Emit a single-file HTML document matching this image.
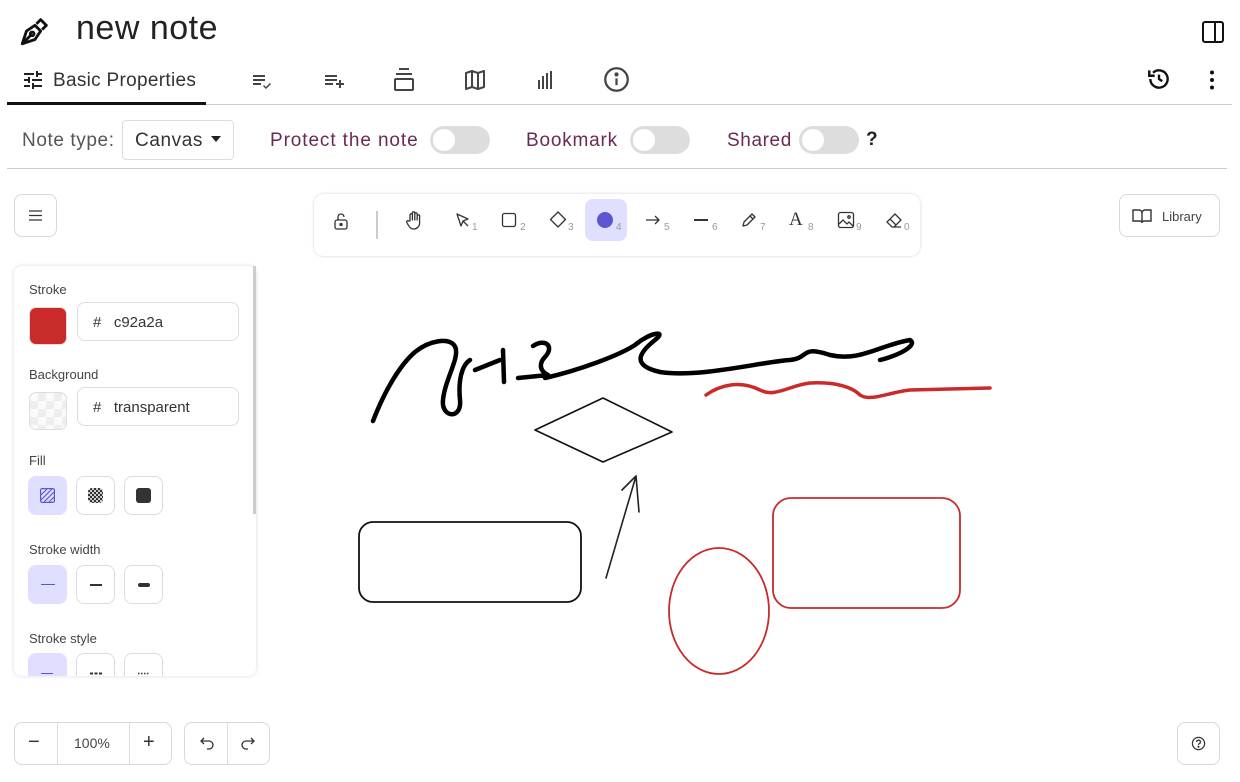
<!DOCTYPE html>
<html><head><meta charset="utf-8"><style>
*{box-sizing:border-box;margin:0;padding:0}
body{width:1240px;height:782px;overflow:hidden;background:#fff;font-family:"Liberation Sans",sans-serif;position:relative;color:#222}
.abs{position:absolute}
.tog{position:absolute;width:60px;height:28px;border-radius:14px;background:#ddd}
.tog::after{content:"";position:absolute;left:3px;top:3px;width:22px;height:22px;border-radius:50%;background:#fff}
.lbl{position:absolute;font-size:19px;color:#555;letter-spacing:0.6px}
.btn{position:absolute;border:1px solid #d8d8d8;border-radius:8px;background:#fff}
.pl{position:absolute;font-size:13px;color:#444}
.sq{position:absolute;width:39px;height:39px;border:1px solid #ddd;border-radius:8px;background:#fff;display:flex;align-items:center;justify-content:center}
.sq.on{background:#e0dfff;border-color:#e0dfff}
.num{font-size:10px;color:#999;position:absolute}
</style></head><body>
<svg class="abs" style="left:18px;top:14px" width="34" height="34" viewBox="0 0 24 24" fill="none" stroke="#111" stroke-width="2" stroke-linejoin="round"><path d="M3 21l3-9 6-4 4 4-4 6-9 3z"/><path d="M3 21l6-6"/><circle cx="10" cy="14" r="1.3"/><path d="M13 7l3-3 4 4-3 3"/></svg>
<div class="abs" style="left:76px;top:9px;font-size:34px;color:#222;letter-spacing:0.5px">new note</div>
<svg class="abs" style="left:1201px;top:20px" width="24" height="24" viewBox="0 0 24 24" fill="none" stroke="#111" stroke-width="2"><rect x="2" y="2" width="20" height="20" rx="2"/><path d="M14 2v20"/></svg>
<svg class="abs" style="left:20px;top:68px" width="26" height="24" viewBox="0 0 24 24" fill="#222"><path d="M3 17v2h6v-2H3zM3 5v2h10V5H3zm10 16v-2h8v-2h-8v-2h-2v6h2zM7 9v2H3v2h4v2h2V9H7zm14 4v-2H11v2h10zm-6-4h2V7h4V5h-4V3h-2v6z"/></svg>
<div class="abs" style="left:53px;top:70px;font-size:19px;color:#333;letter-spacing:0.3px">Basic Properties</div>
<div class="abs" style="left:7px;top:102px;width:199px;height:3px;background:#111"></div>
<div class="abs" style="left:206px;top:104px;width:1026px;height:1px;background:#ccc"></div>
<svg class="abs" style="left:250px;top:69px" width="24" height="24" viewBox="0 0 24 24" fill="#444"><path d="M3 6h12v2H3zM3 10h12v2H3zM3 14h8v2H3zm11 2l2 2 4-4 1 1-5 5-3-3z"/></svg>
<svg class="abs" style="left:322px;top:69px" width="24" height="24" viewBox="0 0 24 24" fill="#444"><path d="M3 6h12v2H3zM3 10h12v2H3zM3 14h8v2H3zm14 0v-3h2v3h3v2h-3v3h-2v-3h-3v-2z"/></svg>
<svg class="abs" style="left:392px;top:67px" width="24" height="26" viewBox="0 0 24 26" fill="none" stroke="#444" stroke-width="2"><path d="M7 2h10M4 7h16"/><rect x="3" y="12" width="18" height="11" rx="1"/></svg>
<svg class="abs" style="left:462px;top:68px" width="26" height="24" viewBox="0 0 24 24" fill="none" stroke="#444" stroke-width="2" stroke-linejoin="round"><path d="M3 5l6-2 6 2 6-2v16l-6 2-6-2-6 2zM9 3v16M15 5v16"/></svg>
<svg class="abs" style="left:534px;top:68px" width="24" height="24" viewBox="0 0 24 24" fill="#444"><rect x="4" y="12" width="2" height="9"/><rect x="8" y="8" width="2" height="13"/><rect x="12" y="5" width="2" height="16"/><rect x="16" y="3" width="2" height="18"/></svg>
<svg class="abs" style="left:603px;top:66px" width="27" height="27" viewBox="0 0 24 24" fill="none" stroke="#444" stroke-width="2"><circle cx="12" cy="12" r="10"/><path d="M12 11v6"/><circle cx="12" cy="7.5" r=".8" fill="#444"/></svg>
<svg class="abs" style="left:1146px;top:66px" width="26" height="26" viewBox="0 0 24 24" fill="none" stroke="#111" stroke-width="2.2"><path d="M4 12a8 8 0 1 0 2.5-5.8"/><path d="M3 4v5h5" /><path d="M12 8v4l3 2"/></svg>
<svg class="abs" style="left:1200px;top:68px" width="24" height="24" viewBox="0 0 24 24" fill="#111"><circle cx="12" cy="4.5" r="2"/><circle cx="12" cy="12" r="2"/><circle cx="12" cy="19.5" r="2"/></svg>
<div class="lbl" style="left:22px;top:130px">Note type:</div>
<div class="abs" style="left:122px;top:120px;width:112px;height:40px;border:1px solid #ddd;border-radius:4px;font-size:19px;color:#333;padding:9px 0 0 12px;letter-spacing:0.6px">Canvas</div>
<div class="abs" style="left:211px;top:136px;border-left:5px solid transparent;border-right:5px solid transparent;border-top:6px solid #222"></div>
<div class="lbl" style="left:270px;top:130px;color:#6a2a55;letter-spacing:0.9px">Protect the note</div>
<div class="tog" style="left:430px;top:126px"></div>
<div class="lbl" style="left:526px;top:130px;color:#6a2a55;letter-spacing:0.8px">Bookmark</div>
<div class="tog" style="left:630px;top:126px"></div>
<div class="lbl" style="left:727px;top:130px;color:#6a2a55;letter-spacing:0.6px">Shared</div>
<div class="tog" style="left:799px;top:126px"></div>
<div class="abs" style="left:866px;top:129px;font-size:19px;font-weight:bold">?</div>
<div class="abs" style="left:7px;top:168px;width:1220px;height:1px;background:#ccc"></div>
<div class="btn" style="left:14px;top:194px;width:43px;height:43px"></div>
<svg class="abs" style="left:28px;top:208px" width="15" height="15" viewBox="0 0 15 15" stroke="#333" stroke-width="1.3"><path d="M1 3h13M1 7.5h13M1 12h13"/></svg>
<div class="btn" style="left:1119px;top:194px;width:101px;height:43px;font-size:13px;color:#444;padding:14px 0 0 42px">Library</div>
<svg class="abs" style="left:1132px;top:208px" width="20" height="16" viewBox="0 0 20 16" fill="none" stroke="#333" stroke-width="1.4"><path d="M1 2h6a3 3 0 0 1 3 3v10a2 2 0 0 0-2-2H1zM19 2h-6a3 3 0 0 0-3 3v10a2 2 0 0 1 2-2h7z"/></svg>
<div class="abs" style="left:314px;top:194px;width:606px;height:62px;border-radius:10px;background:#fff;box-shadow:0 0 3px rgba(0,0,0,.18)"></div>
<svg class="abs" style="left:332px;top:212px" width="18" height="18" viewBox="0 0 18 18" fill="none" stroke="#333" stroke-width="1.3"><rect x="3" y="8" width="12" height="9" rx="2"/><path d="M6 8V5a3 3 0 0 1 6 0"/><circle cx="9" cy="12.5" r="1" fill="#333"/></svg>
<div class="abs" style="left:376px;top:211px;width:2px;height:28px;background:#ccc"></div>
<svg class="abs" style="left:404px;top:210px" width="20" height="20" viewBox="0 0 20 20" fill="none" stroke="#333" stroke-width="1.3" stroke-linejoin="round"><path d="M6 11V5a1.2 1.2 0 0 1 2.4 0v5V3a1.2 1.2 0 0 1 2.4 0v7V4a1.2 1.2 0 0 1 2.4 0v6V6a1.2 1.2 0 0 1 2.4 0v7a6 6 0 0 1-6 6c-3 0-4-2-6-5l-1-2a1.2 1.2 0 0 1 2-1z"/></svg>
<svg class="abs" style="left:455px;top:212px" width="16" height="16" viewBox="0 0 16 16" fill="none" stroke="#333" stroke-width="1.3" stroke-linejoin="round"><path d="M2 2l4 12 2-5 5-2z M8 9l5 5"/></svg><span class="num" style="left:472px;top:222px">1</span>
<svg class="abs" style="left:501px;top:212px" width="16" height="16" viewBox="0 0 16 16" fill="none" stroke="#333" stroke-width="1.3"><rect x="1.5" y="1.5" width="13" height="13" rx="2"/></svg><span class="num" style="left:520px;top:222px">2</span>
<svg class="abs" style="left:548px;top:210px" width="20" height="20" viewBox="0 0 20 20" fill="none" stroke="#333" stroke-width="1.3" stroke-linejoin="round"><path d="M10 2l7.5 7.5-7.5 7.5-7.5-7.5z"/></svg><span class="num" style="left:568px;top:222px">3</span>
<div class="abs" style="left:585px;top:199px;width:42px;height:42px;border-radius:8px;background:#e0dfff"></div>
<div class="abs" style="left:597px;top:212px;width:16px;height:16px;border-radius:50%;background:#5b57d1"></div><span class="num" style="left:616px;top:222px">4</span>
<svg class="abs" style="left:644px;top:212px" width="18" height="16" viewBox="0 0 18 16" fill="none" stroke="#333" stroke-width="1.3"><path d="M2 8h13M11 4l4 4-4 4"/></svg><span class="num" style="left:664px;top:222px">5</span>
<div class="abs" style="left:694px;top:219px;width:14px;height:2px;background:#333"></div><span class="num" style="left:712px;top:222px">6</span>
<svg class="abs" style="left:740px;top:211px" width="18" height="18" viewBox="0 0 18 18" fill="none" stroke="#333" stroke-width="1.3" stroke-linejoin="round"><path d="M3 15l1-4 8-8 3 3-8 8zM10 5l3 3"/></svg><span class="num" style="left:760px;top:222px">7</span>
<div class="abs" style="left:789px;top:209px;font-size:19px;font-family:'Liberation Serif',serif;color:#333">A</div><span class="num" style="left:808px;top:222px">8</span>
<svg class="abs" style="left:837px;top:211px" width="18" height="18" viewBox="0 0 18 18" fill="none" stroke="#333" stroke-width="1.3"><rect x="1.5" y="1.5" width="15" height="15" rx="2"/><path d="M2 13l4-4 4 4 2-2 4 4"/><circle cx="12" cy="6" r="1.2"/></svg><span class="num" style="left:856px;top:222px">9</span>
<svg class="abs" style="left:885px;top:211px" width="18" height="18" viewBox="0 0 18 18" fill="none" stroke="#333" stroke-width="1.3" stroke-linejoin="round"><path d="M7 16l-5-5 8-8 6 6-7 7zM5 8l6 6M7 16h9"/></svg><span class="num" style="left:904px;top:222px">0</span>
<div class="abs" style="left:14px;top:266px;width:242px;height:410px;border-radius:8px;background:#fff;box-shadow:0 0 4px rgba(0,0,0,.15)"></div>
<div class="abs" style="left:253px;top:266px;width:3px;height:248px;background:#ccc"></div>
<div class="pl" style="left:29px;top:282px">Stroke</div>
<div class="abs" style="left:29px;top:307px;width:38px;height:38px;border-radius:7px;background:#c92a2a;border:1px solid #ddd"></div>
<div class="abs" style="left:77px;top:302px;width:162px;height:39px;border:1px solid #ddd;border-radius:8px;font-size:15px;color:#333;padding:11px 0 0 15px">#&nbsp;&nbsp;&nbsp;c92a2a</div>
<div class="pl" style="left:29px;top:367px">Background</div>
<div class="abs" style="left:29px;top:392px;width:38px;height:38px;border-radius:7px;border:1px solid #ddd;background:repeating-conic-gradient(#eee 0 25%,#fafafa 0 50%) 0 0/16px 16px"></div>
<div class="abs" style="left:77px;top:387px;width:162px;height:39px;border:1px solid #ddd;border-radius:8px;font-size:15px;color:#333;padding:11px 0 0 15px">#&nbsp;&nbsp;&nbsp;transparent</div>
<div class="pl" style="left:29px;top:453px">Fill</div>
<div class="sq on" style="left:28px;top:476px"><svg width="15" height="15" viewBox="0 0 15 15" fill="none" stroke="#5b57d1" stroke-width="1.2"><rect x=".6" y=".6" width="13.8" height="13.8" rx="1.5"/><path d="M1 7l6-6M1 12L12 1M4 14L14 4M9 14l5-5"/></svg></div>
<div class="sq" style="left:76px;top:476px"><div style="width:15px;height:15px;border-radius:4px;background:repeating-conic-gradient(#333 0 25%,#ccc 0 50%) 0 0/4px 4px"></div></div>
<div class="sq" style="left:124px;top:476px"><div style="width:15px;height:15px;border-radius:3px;background:#333"></div></div>
<div class="pl" style="left:29px;top:542px">Stroke width</div>
<div class="sq on" style="left:28px;top:565px"><div style="width:14px;height:1px;background:#5b57d1"></div></div>
<div class="sq" style="left:76px;top:565px"><div style="width:12px;height:2px;background:#333"></div></div>
<div class="sq" style="left:124px;top:565px"><div style="width:12px;height:4px;border-radius:2px;background:#333"></div></div>
<div class="pl" style="left:29px;top:631px">Stroke style</div>
<div class="abs" style="left:14px;top:653px;width:242px;height:23px;overflow:hidden">
<div class="sq on" style="left:14px;top:0"></div><div class="sq" style="left:62px;top:0"></div><div class="sq" style="left:110px;top:0"></div>
<div class="abs" style="left:27px;top:20px;width:12px;height:1px;background:#5b57d1"></div>
<svg class="abs" style="left:76px;top:19px" width="12" height="3"><path d="M0 1.5h3M4.5 1.5h3M9 1.5h3" stroke="#333" stroke-width="2"/></svg>
<svg class="abs" style="left:124px;top:19px" width="12" height="3"><path d="M0 1.5h1.5M3 1.5h1.5M6 1.5h1.5M9 1.5h1.5" stroke="#333" stroke-width="1.5"/></svg>
</div>
<svg class="abs" style="left:0;top:0" width="1240" height="782" fill="none" stroke-linecap="round" stroke-linejoin="round">
<path d="M373 421C385 390 400 365 415 352 430 340 448 338 454 345 462 355 445 378 443 400 441 418 462 420 460 400 458 380 462 365 470 360 M475 370L500 360M504 382L503 350M533 346C545 338 555 346 545 357 540 362 538 370 548 375L518 378M545 378C580 370 620 355 635 345 650 332 668 330 655 340 640 352 630 365 660 372 C700 378 760 362 790 360 C810 358 800 345 830 355 C860 362 880 345 910 340 918 345 900 355 880 360" stroke="#000" stroke-width="4.5"/>
<path d="M706 395C720 385 740 380 760 390 775 398 790 385 810 383 830 382 850 385 860 395 870 402 890 392 910 390L990 388" stroke="#c92a2a" stroke-width="3.5"/>
<path d="M535 430L603 398L672 432L603 462Z" stroke="#111" stroke-width="1.6"/>
<path d="M606 578L636 476M622 490L636 476L639 512" stroke="#222" stroke-width="1.6"/>
<rect x="359" y="522" width="222" height="80" rx="14" stroke="#111" stroke-width="1.8"/>
<ellipse cx="719" cy="611" rx="50" ry="63" stroke="#c92a2a" stroke-width="1.8"/>
<rect x="773" y="498" width="187" height="110" rx="18" stroke="#c92a2a" stroke-width="1.8"/>
</svg>
<div class="btn" style="left:14px;top:722px;width:158px;height:43px"></div>
<div class="abs" style="left:57px;top:723px;width:1px;height:41px;background:#ddd"></div>
<div class="abs" style="left:129px;top:723px;width:1px;height:41px;background:#ddd"></div>
<div class="abs" style="left:28px;top:731px;font-size:20px;color:#333">−</div>
<div class="abs" style="left:74px;top:735px;font-size:14px;color:#444">100%</div>
<div class="abs" style="left:143px;top:731px;font-size:20px;color:#333">+</div>
<div class="btn" style="left:184px;top:722px;width:86px;height:43px"></div>
<div class="abs" style="left:227px;top:723px;width:1px;height:41px;background:#ddd"></div>
<svg class="abs" style="left:199px;top:735px" width="16" height="16" viewBox="0 0 16 16" fill="none" stroke="#333" stroke-width="1.3"><path d="M5 3L2 6l3 3M2 6h8a4 4 0 0 1 0 8H8"/></svg>
<svg class="abs" style="left:240px;top:735px" width="16" height="16" viewBox="0 0 16 16" fill="none" stroke="#333" stroke-width="1.3"><path d="M11 3l3 3-3 3M14 6H6a4 4 0 0 0 0 8h2"/></svg>
<div class="btn" style="left:1177px;top:722px;width:43px;height:43px"></div>
<svg class="abs" style="left:1191px;top:736px" width="15" height="15" viewBox="0 0 16 16" fill="none" stroke="#333" stroke-width="1.3"><circle cx="8" cy="8" r="6.5"/><path d="M6 6.3a2 2 0 1 1 2.5 2c-.5.2-.5.6-.5 1.2"/><circle cx="8" cy="11.5" r=".5" fill="#333"/></svg>
</body></html>
